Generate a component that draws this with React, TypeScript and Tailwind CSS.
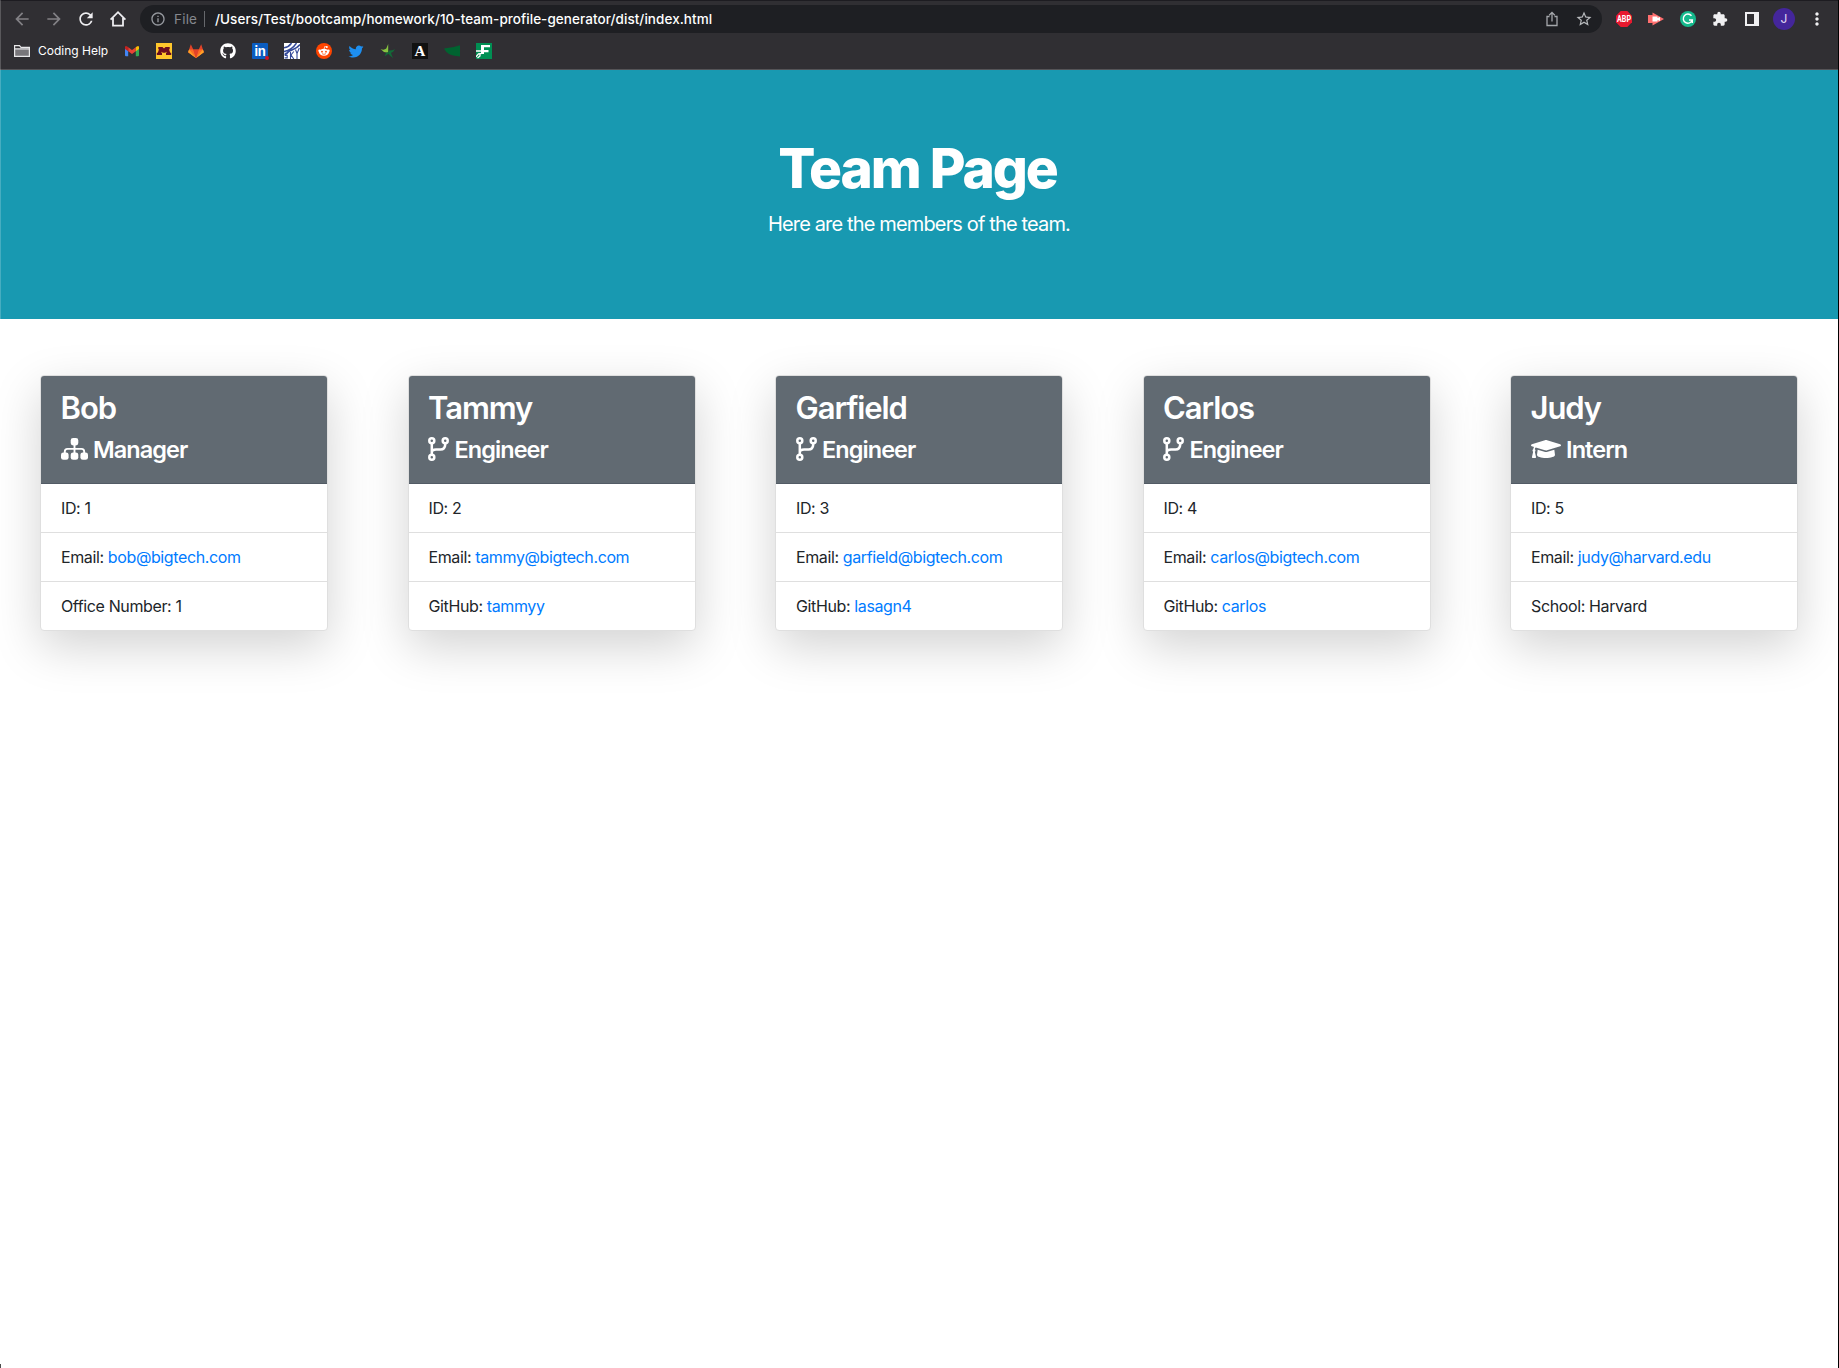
import React from "react";
import { FaGraduationCap, FaGithub, FaTwitter } from "react-icons/fa";
import { MdRefresh, MdExtension, MdMoreVert, MdStarOutline, MdArrowBack, MdArrowForward, MdInfoOutline } from "react-icons/md";

type Member = {
  name: string;
  role: "Manager" | "Engineer" | "Intern";
  id: number;
  email: string;
  label: string;
  value: string;
  link?: boolean;
};

const team: Member[] = [
  { name: "Bob", role: "Manager", id: 1, email: "bob@bigtech.com", label: "Office Number", value: "1" },
  { name: "Tammy", role: "Engineer", id: 2, email: "tammy@bigtech.com", label: "GitHub", value: "tammyy", link: true },
  { name: "Garfield", role: "Engineer", id: 3, email: "garfield@bigtech.com", label: "GitHub", value: "lasagn4", link: true },
  { name: "Carlos", role: "Engineer", id: 4, email: "carlos@bigtech.com", label: "GitHub", value: "carlos", link: true },
  { name: "Judy", role: "Intern", id: 5, email: "judy@harvard.edu", label: "School", value: "Harvard" },
];

function BranchIcon() {
  return (
    <svg width="21" height="24" viewBox="0 0 21 24" fill="none" stroke="white" strokeWidth="2.5">
      <circle cx="3.8" cy="3.8" r="2.5" />
      <circle cx="17.2" cy="3.8" r="2.5" />
      <circle cx="3.8" cy="20.2" r="2.5" />
      <path d="M3.8 6.3V17.7M17.2 6.3V7.6Q17 12.4 12.5 12.4H8Q3.8 12.4 3.8 15.5" />
    </svg>
  );
}

function ManagerIcon() {
  return (
    <svg width="27" height="22" viewBox="0 0 27 22" fill="white">
      <rect x="9.7" y="0" width="7.6" height="7.4" rx="2.4" />
      <rect x="0" y="14.4" width="7.6" height="7.4" rx="2.4" />
      <rect x="9.7" y="14.4" width="7.6" height="7.4" rx="2.4" />
      <rect x="19.4" y="14.4" width="7.6" height="7.4" rx="2.4" />
      <path fill="none" stroke="white" strokeWidth="1.9" d="M13.5 7V15M3.8 15V13.6Q3.8 10.9 6.5 10.9H20.5Q23.2 10.9 23.2 13.6V15" />
    </svg>
  );
}

function RoleIcon({ role }: { role: Member["role"] }) {
  if (role === "Manager") return <ManagerIcon />;
  if (role === "Engineer") return <BranchIcon />;
  return <FaGraduationCap className="h-6 w-[30px]" />;
}

function Card({ m }: { m: Member }) {
  return (
    <article className="h-[256px] w-[288px] rounded-[4px] border border-[#dfdfdf] bg-white shadow-[0_16px_48px_rgba(0,0,0,0.175)]">
      <header className="h-[108px] rounded-t-[3px] border-b border-[#525b65] bg-[#616a72] px-[19.6px] pt-[13px] text-white">
        <h2 className="text-[31px] leading-[38px] font-[560] tracking-[-1.1px]">{m.name}</h2>
        <div className="mt-[7px] flex h-[29px] items-center gap-[5.5px]">
          <RoleIcon role={m.role} />
          <h3 className="pt-px text-[23.5px] leading-[29px] font-[560] tracking-[-0.95px]">{m.role}</h3>
        </div>
      </header>
      <ul className="text-[16px] leading-6 tracking-[-0.38px] text-[#212529]">
        <li className="h-[49px] border-b border-[#dfdfdf] px-[20px] py-3">ID: {m.id}</li>
        <li className="h-[49px] border-b border-[#dfdfdf] px-[20px] py-3">
          Email: <a className="text-[#007bff]">{m.email}</a>
        </li>
        <li className="h-[48px] px-[20px] py-3">
          {m.label}: {m.link ? <a className="text-[#007bff]">{m.value}</a> : m.value}
        </li>
      </ul>
    </article>
  );
}

function Bookmarks() {
  return (
    <div className="flex h-4 items-center gap-4">
      <svg width="16" height="16" viewBox="0 0 16 16">
        <path d="M1 5L4.2 7.2V13.2H2A1 1 0 0 1 1 12.2Z" fill="#4285f4" />
        <path d="M11.8 7.2L15 5V12.2A1 1 0 0 1 14 13.2H11.8Z" fill="#34a853" />
        <path d="M4.2 4.2L8 7L11.8 4.2V8.2L8 11L4.2 8.2Z" fill="#ea4335" />
        <path d="M1 5V4Q1.3 2.2 3.2 3.4L4.2 4.2V8.2L1 5.9Z" fill="#c5221f" />
        <path d="M15 5V4Q14.7 2.2 12.8 3.4L11.8 4.2V8.2L15 5.9Z" fill="#fbbc04" />
      </svg>
      <svg width="16" height="16" viewBox="0 0 16 16">
        <path fill="#ffc72c" d="M0 0H16V16H0Z" />
        <path fill="#6b0f1f" d="M2.3 4H6.5L8 5.5L9.5 4H13.7V6.2H13L14.2 9.7H15.2V12H10V9.7H10.7L10.4 8.8L9.2 9.8H6.8L5.6 8.8L5.3 9.7H6V12H.8V9.7H1.8L3 6.2H2.3Z" />
      </svg>
      <svg width="16" height="16" viewBox="0 0 16 16">
        <path fill="#e24329" d="M8 15L.2 9.2L2.8 1.2L5.3 6.5H10.7L13.2 1.2L15.8 9.2Z" />
        <path fill="#fc6d26" d="M8 15L5.3 6.5H1.1L.2 9.2ZM8 15L10.7 6.5H14.9L15.8 9.2Z" />
        <path fill="#e24329" d="M8 15L5.3 6.5H10.7Z" />
        <path fill="#fca326" d="M1.1 6.5L.2 9.2L8 15ZM14.9 6.5L15.8 9.2L8 15Z" />
      </svg>
      <FaGithub className="h-4 w-4 text-white" />
      <span className="relative flex h-4 w-4 items-center justify-center rounded-[1px] bg-[#0a5cc0] text-[13px] leading-4 font-bold tracking-[-0.3px] text-white">
        in
        <i className="absolute -right-px -bottom-px h-1 w-1 rounded-full bg-[#d11124]" />
      </span>
      <svg width="16" height="16" viewBox="0 0 16 16">
        <path fill="#fff" d="M0 0H16V16H0Z" />
        <g fill="none" stroke="#344a9a">
          <path strokeWidth="1.5" d="M0 4.7Q5 4 7.5 0M0 8.6Q8 7 12.5 0M1 12Q4 8 9 6.5Q13 5 16 1.5" />
          <path strokeWidth="1.1" d="M3.5 10.2H1.2V12.4H3.2V14.9H.6M6.5 9V16M9.8 8.5L7 12L9.8 16M11.5 6.5L13 10.5M15.3 5L13 10.5V16" />
        </g>
      </svg>
      <svg width="16" height="16" viewBox="0 0 16 16">
        <circle cx="8" cy="8" r="8" fill="#ff4500" />
        <ellipse cx="8" cy="9.3" rx="4.9" ry="3.5" fill="#fff" />
        <g fill="#fff"><circle cx="3.6" cy="7.8" r="1.3" /><circle cx="12.4" cy="7.8" r="1.3" /><circle cx="10.8" cy="4" r="1" /></g>
        <path d="M8 6.5L8.7 3.5L10.8 4" fill="none" stroke="#fff" strokeWidth=".7" />
        <g fill="#ff4500"><circle cx="6" cy="8.7" r=".9" /><circle cx="10" cy="8.7" r=".9" /></g>
        <path d="M6 10.7Q8 12 10 10.7" fill="none" stroke="#ff4500" strokeWidth=".7" />
      </svg>
      <FaTwitter className="h-[15px] w-4 text-[#1d8ff0]" />
      <svg width="16" height="16" viewBox="0 0 16 16">
        <path fill="#86c440" d="M.5 6Q4 7.6 6.3 5.6L8.2 1V9.2Q4 10.2 .5 6Z" />
        <path fill="#126a38" d="M8.6 7.6Q12 7.8 15 6.2Q13.5 9 11 9.8Q11.6 12.6 13 15Q10.5 13.4 8.3 10.8Q6.5 12.6 4.6 13.2Q5.5 11.3 6.2 9.8L8.6 9.2Z" />
      </svg>
      <span className="flex h-4 w-4 items-center justify-center bg-[#111] font-['Liberation_Serif'] text-[15px] leading-4 font-bold text-white">A</span>
      <svg width="16" height="16" viewBox="0 0 16 16">
        <path fill="#006330" d="M0 5.5Q8 5 16 2.2V13.6Q8 12.5 5 11Q2 9.5 0 5.5Z" />
      </svg>
      <svg width="16" height="16" viewBox="0 0 16 16">
        <path fill="#008f53" d="M0 0H16V16H0Z" />
        <path fill="#fff" d="M5 2H14V4.3H8V7H12.5V9.3H8V11H5V7Z" />
        <path fill="none" stroke="#fff" strokeWidth="1.3" d="M0 8H5M0 13.8L2.5 10.8L6 10.3M1.5 15L4 13V11" />
      </svg>
    </div>
  );
}

function BrowserChrome() {
  return (
    <div className="flex h-[70px] flex-col border-t border-b border-t-[#1d1c21] border-b-[#555457] bg-[#302f33]">
      <div className="flex h-[36px] items-center">
        <div className="flex items-center gap-3 pl-[12px]">
          <MdArrowBack className="h-5 w-5 text-[#828185]" />
          <MdArrowForward className="h-5 w-5 text-[#828185]" />
          <MdRefresh className="h-5 w-5 text-[#ededf0]" />
          <svg width="20" height="20" viewBox="0 0 20 20" fill="none" stroke="#ededf0" strokeWidth="1.8">
            <path d="M2.6 10.6L10 3.2L17.4 10.6M5 9V16.6H15V9" />
          </svg>
        </div>
        <div className="ml-[12px] flex h-7 w-[1462px] items-center rounded-full bg-[#1e1f23] pr-[9px] pl-[10px] text-[13.5px]">
          <MdInfoOutline className="h-4 w-4 text-[#96999f]" />
          <span className="ml-[8px] w-[23px] tracking-[0.2px] text-[#85888e]">File</span>
          <span className="ml-[7px] h-4 w-px bg-[#66686c]" />
          <span className="ml-[10px] flex-1 font-[450] tracking-[0.055px] whitespace-nowrap text-white">/Users/Test/bootcamp/homework/10-team-profile-generator/dist/index.html</span>
          <svg className="mr-[15px]" width="16" height="16" viewBox="0 0 16 16" fill="none" stroke="#a5a7ab" strokeWidth="1.3">
            <path d="M5.5 5.5H3V14.5H13V5.5H10.5M8 10.5V1.5M5.2 4.2L8 1.4L10.8 4.2" />
          </svg>
          <MdStarOutline className="h-[18px] w-[18px] text-[#b8babd]" />
        </div>
        <div className="ml-[14px] flex items-center gap-4">
          <svg width="16" height="16" viewBox="0 0 16 16">
            <path fill="#e8192f" d="M4.7 0H11.3L16 4.7V11.3L11.3 16H4.7L0 11.3V4.7Z" />
            <text x="1" y="10.8" textLength="14" lengthAdjust="spacingAndGlyphs" fill="white" fontSize="8.2" fontWeight="700" fontFamily="Roboto, sans-serif">ABP</text>
          </svg>
          <svg width="16" height="16" viewBox="0 0 16 16">
            <path fill="#ff6f6f" d="M0 4H4.5V1.5L16 8L4.5 14.5V12H0Z" />
            <path fill="#fff" d="M4.5 5.5H9.5V7L12 6V10L9.5 9V10.5H4.5Z" />
          </svg>
          <svg width="16" height="16" viewBox="0 0 16 16">
            <circle cx="8" cy="8" r="8" fill="#15b98c" />
            <path fill="none" stroke="#fff" strokeWidth="1.4" d="M11.5 4.8A4.6 4.6 0 1 0 12.3 9H9M12.3 8.5V12" />
          </svg>
          <MdExtension className="h-4 w-4 text-[#f0f0f2]" />
          <span className="ml-px h-[14px] w-[14px] border-2 border-r-[5px] border-[#f0f0f2]" />
        </div>
        <span className="ml-[14px] flex h-[22px] w-[22px] items-center justify-center rounded-full bg-[#44269b] text-[12px] text-[#e3dcf5]">J</span>
        <MdMoreVert className="ml-[11.5px] h-5 w-5 text-[#f0f0f2]" />
      </div>
      <div className="flex h-[28px] items-center pl-[14px]">
        <svg width="16" height="14" viewBox="0 0 16 14" stroke="#e8e8ea" strokeWidth="1.2">
          <path fill="none" d="M.6 12.4V1.6H5.5L7 3.4H15.4V12.4Z" />
          <path fill="#77767a" d="M.6 12.4V4.9H15.4V12.4Z" />
        </svg>
        <span className="ml-[8px] w-[71px] text-[12px] whitespace-nowrap text-white">Coding Help</span>
        <div className="ml-[15px]"><Bookmarks /></div>
      </div>
    </div>
  );
}

export default function App() {
  return (
    <div className="relative h-[1368px] w-[1839px] overflow-hidden border-r border-black bg-white font-['Inter',sans-serif]">
      <BrowserChrome />
      <section className="flex h-[249px] flex-col items-center bg-[#1899b1] text-white">
        <h1 className="mt-[64px] pr-[3px] text-[55px] leading-[68px] font-[780] tracking-[-2.1px]">Team Page</h1>
        <p className="mt-[7px] text-[20px] leading-[30px] font-[370] tracking-[-0.85px]">Here are the members of the team.</p>
      </section>
      <main className="mt-[56px] flex justify-between px-10">
        {team.map((m) => <Card key={m.id} m={m} />)}
      </main>
      <i className="absolute top-0 left-0 h-[319px] w-px bg-white/20" />
      <i className="absolute bottom-0 left-0 h-1 w-px bg-black/70" />
    </div>
  );
}
